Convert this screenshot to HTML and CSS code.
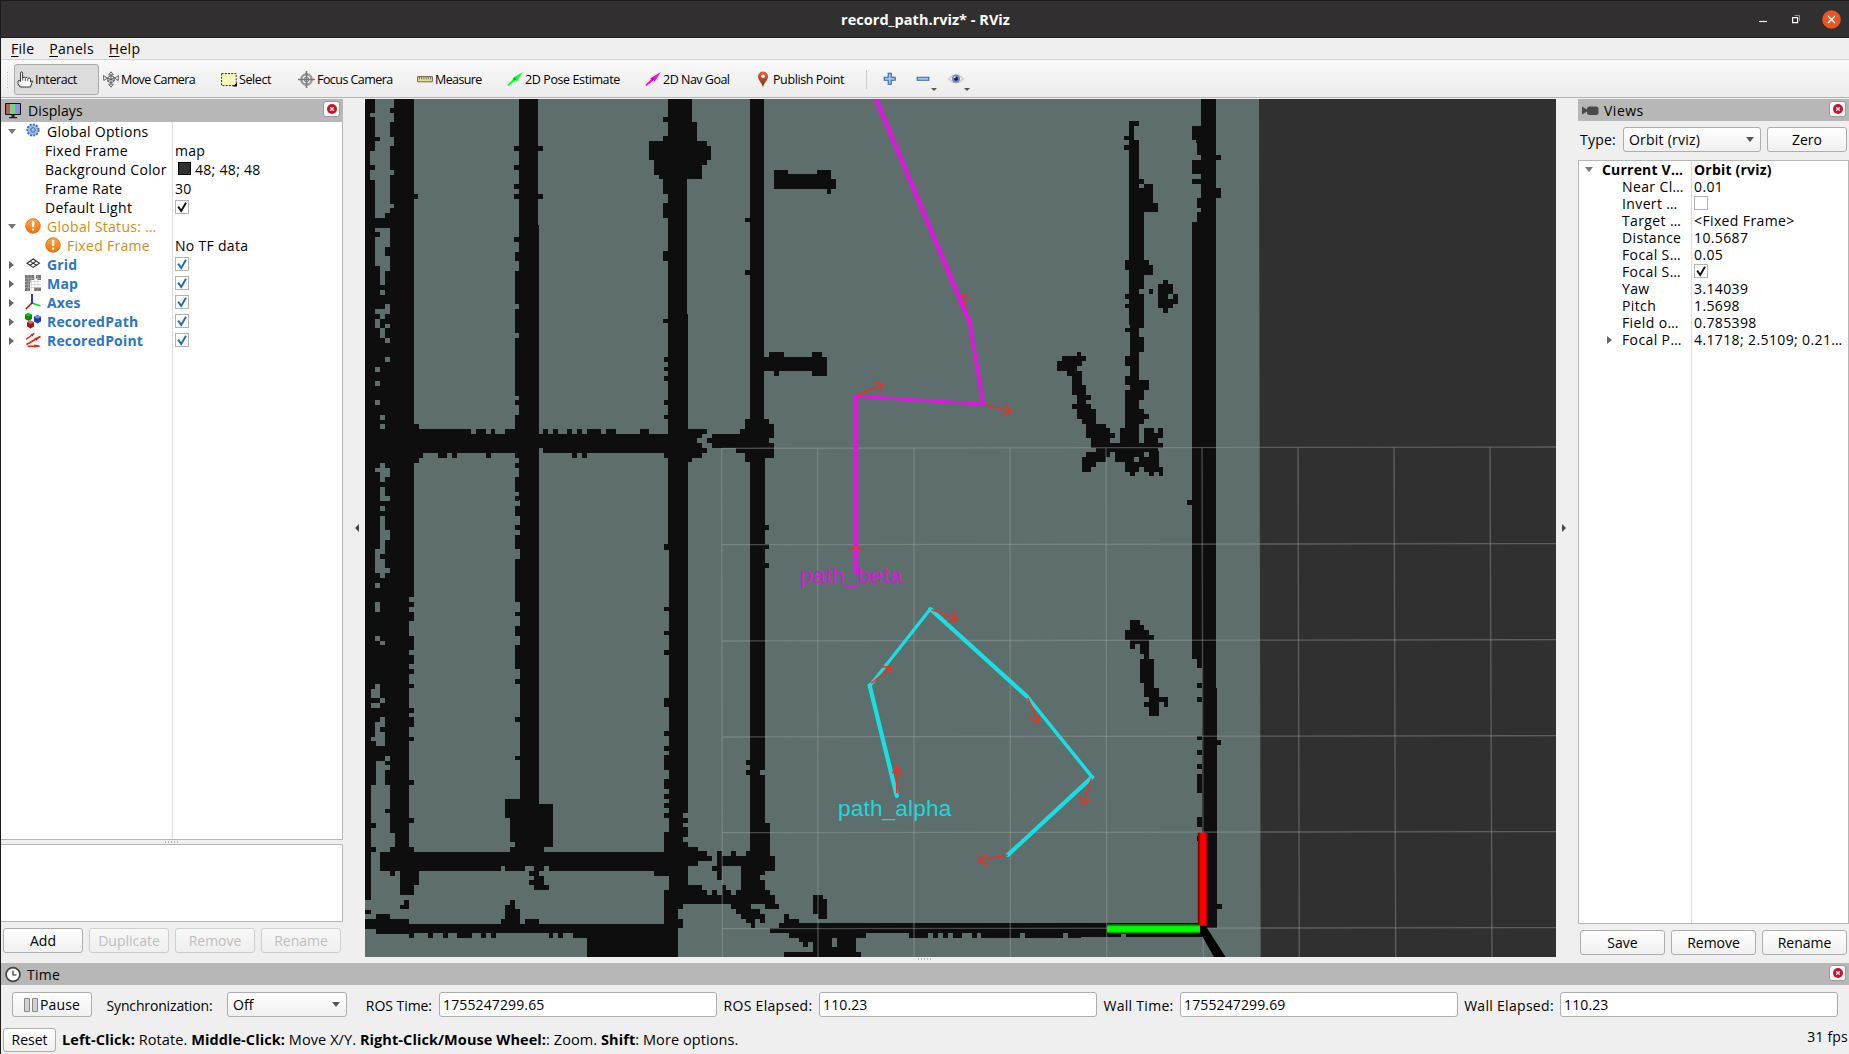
FILE: index.html
```html
<!DOCTYPE html>
<html lang="en">
<head>
<meta charset="utf-8">
<title>record_path.rviz* - RViz</title>
<link rel="stylesheet" href="styles.css">
</head>
<body>
<svg class="defs" width="0" height="0">
  <defs>
    <linearGradient id="org" x1="0" y1="0" x2="0" y2="1"><stop offset="0" stop-color="#fba94c"/><stop offset="1" stop-color="#ee6f05"/></linearGradient>
    <linearGradient id="pin" x1="0" y1="0" x2="0" y2="1"><stop offset="0" stop-color="#f0603a"/><stop offset=".6" stop-color="#a8432a"/><stop offset="1" stop-color="#3c4a20"/></linearGradient>
    <linearGradient id="scr" x1="0" y1="0" x2="1" y2="0"><stop offset=".33" stop-color="#b85a60"/><stop offset=".33" stop-color="#7fcf85"/><stop offset=".66" stop-color="#7fcf85"/><stop offset=".66" stop-color="#8f93dc"/></linearGradient>
    <linearGradient id="redAxis"><stop offset="0" stop-color="#500"/><stop offset=".3" stop-color="#f00"/><stop offset=".75" stop-color="#f00"/><stop offset="1" stop-color="#600"/></linearGradient>
    <linearGradient id="greenAxis" x1="0" y1="0" x2="0" y2="1"><stop offset="0" stop-color="#040"/><stop offset=".3" stop-color="#0f0"/><stop offset=".75" stop-color="#0f0"/><stop offset="1" stop-color="#040"/></linearGradient>
    <symbol id="warn" viewBox="0 0 16 16"><circle cx="8" cy="8" r="7.3" fill="url(#org)" stroke="#d9680a" stroke-width=".8"/><rect x="6.9" y="3" width="2.4" height="6.3" rx="1" fill="#fff"/><rect x="6.9" y="10.4" width="2.4" height="2.4" rx=".8" fill="#fff"/></symbol>
    <symbol id="check" viewBox="0 0 14 14"><path d="M3.2 6.6L6.2 11L11 2.8" fill="none" stroke="currentColor" stroke-width="1.9"/></symbol>
    <symbol id="close" viewBox="0 0 10 10"><circle cx="5" cy="5" r="5" fill="#c7162b"/><path d="M3.2 3.2L6.8 6.8M6.8 3.2L3.2 6.8" stroke="#fbe4e6" stroke-width="1.3"/></symbol>
  </defs>
</svg>

<header class="titlebar">
  <span class="title">record_path.rviz* - RViz</span>
  <div class="winbtns">
    <svg width="8" height="18"><path d="M0 11.5H8" stroke="#fff" stroke-width="1.2"/></svg>
    <svg width="8" height="18"><path d="M.6 7.6h5v5h-5z" fill="none" stroke="#fff" stroke-width="1.2"/><path d="M2.5 5.4h5v5.4" fill="none" stroke="#999" stroke-width="1"/></svg>
    <svg width="19" height="19"><circle cx="9.5" cy="9.5" r="9.3" fill="#e95420"/><path d="M6 6L13 13M13 6L6 13" stroke="#fff" stroke-width="1.4"/></svg>
  </div>
</header>

<nav class="menubar"><span><u>F</u>ile</span><span><u>P</u>anels</span><span><u>H</u>elp</span></nav>

<div class="toolbar">
  <i class="grip"></i>
  <div class="tool active w1"><svg width="16" height="17"><path d="M3.5 10.5V2.2Q3.5 .8 4.5 .8T5.6 2.2V7Q7.8 5 8.2 7Q10.3 5.5 10.8 7.4Q13.5 6 13.5 8.5V11Q15.5 9 15.5 10L13.5 16H3L1 12.5V10Q2 8.6 3.5 10.5z" fill="#fff" stroke="#333" stroke-width="1"/><path d="M8.3 7.5V10M10.8 8V10.3M5.7 7V9.5" stroke="#333" stroke-width=".8"/></svg><span>Interact</span></div>
  <div class="tool w2"><svg width="16" height="17"><g fill="none" stroke="#555" stroke-width=".9"><path d="M8 .8L10.3 3.8H5.7zM8 16.2L10.3 13.2H5.7zM.5 4.5L4.2 7.2L.8 9.5zM15.5 4.5L11.8 7.2L15.2 9.5z"/><circle cx="8" cy="8.2" r="3.4"/><path d="M4 7L12 9.8M12 6.5L4 10M8 4V13"/></g></svg><span>Move Camera</span></div>
  <div class="tool w3"><svg width="16" height="17"><path d="M.6 2.6h14.6v12H.6z" fill="#fdf8b9" stroke="#333" stroke-width="1" stroke-dasharray="2 1.2"/><path d="M16 11.5V15.4H12z" fill="#000"/></svg><span>Select</span></div>
  <div class="tool w4"><svg width="17" height="17"><g fill="none" stroke="#777"><circle cx="8.5" cy="8.5" r="5.2" stroke-width="2.4" stroke="#999"/><circle cx="8.5" cy="8.5" r="2.4"/><path d="M8.5 0V17M0 8.5H17" stroke-width="1.6"/></g></svg><span>Focus Camera</span></div>
  <div class="tool w5"><svg width="16" height="17"><path d="M.6 5.6h14.8v5.2H.6z" fill="#e6dd9c" stroke="#6b6547"/><path d="M2.5 6v2.4M4.7 6v2.4M6.9 6v2.4M9.1 6v2.4M11.3 6v2.4M13.5 6v2.4" stroke="#6b6547" stroke-width=".9"/></svg><span>Measure</span></div>
  <div class="tool w6"><svg width="16" height="17"><path d="M.2 14L6 8.2L5.4 7.2L15.8 1L9.8 10.5L8.6 9.2L1.5 15z" fill="#0aff2c"/><path d="M6.4 8.6L8 6.8L8.8 8.8z" fill="#0a6b1a"/></svg><span>2D Pose Estimate</span></div>
  <div class="tool w7"><svg width="16" height="17"><path d="M.2 14L6 8.2L5.4 7.2L15.8 1L9.8 10.5L8.6 9.2L1.5 15z" fill="#ff0ad8"/><path d="M6.4 8.6L8 6.8L8.8 8.8z" fill="#7a0a6a"/></svg><span>2D Nav Goal</span></div>
  <div class="tool w8"><svg width="12" height="17"><path d="M6 16.3C4.7 11.5 1 9 1 5.5A5 5 0 0 1 11 5.5C11 9 7.3 11.5 6 16.3z" fill="url(#pin)"/><circle cx="6" cy="5.2" r="1.8" fill="#fff"/></svg><span>Publish Point</span></div>
  <i class="tsep"></i>
  <div class="mini"><svg width="14" height="14"><path d="M5.2 1.2h3v4h4v3h-4v4h-3v-4h-4v-3h4z" fill="#a9c6ea" stroke="#3465a4" stroke-width="1.1"/></svg></div>
  <div class="mini dd"><svg width="14" height="14"><path d="M1.2 5.3h11.6v3H1.2z" fill="#a9c6ea" stroke="#3465a4" stroke-width="1.1"/></svg></div>
  <div class="mini dd"><svg width="16" height="14"><path d="M.5 7Q8-2 15.5 7Q8 15 .5 7z" fill="#e9e9ea" stroke="#b9b9b9"/><circle cx="8" cy="6.8" r="4" fill="#7287c4"/><circle cx="8" cy="6.8" r="2" fill="#141a3a"/><circle cx="6.7" cy="5.2" r="1" fill="#dfe6fa"/></svg></div>
</div>

<main class="work">
  <section class="dock left">
    <div class="dhead"><svg class="hicon" width="16" height="17"><path d="M.5 1.5h15v11H.5z" fill="url(#scr)" stroke="#111"/><path d="M6.5 13h3v2h2.5v1.3H4V15h2.5z" fill="#222"/></svg><span>Displays</span><b class="xbtn"><svg width="10" height="10"><use href="#close"/></svg></b></div>
    <div class="tree ltree">
      <div class="row"><i class="exp open"></i><svg class="ic" width="16" height="16"><circle cx="8" cy="7" r="5.6" fill="#8fb3e3" stroke="#3a6fb7" stroke-width="2" stroke-dasharray="2 1.2"/><circle cx="8" cy="7" r="4.6" fill="#9dbde8"/><circle cx="8" cy="7" r="2.3" fill="none" stroke="#3a6fb7"/></svg><span>Global Options</span></div>
      <div class="row sub"><span class="k">Fixed Frame</span><span>map</span></div>
      <div class="row sub"><span class="k">Background Color</span><i class="swatch"></i><span>48; 48; 48</span></div>
      <div class="row sub"><span class="k">Frame Rate</span><span>30</span></div>
      <div class="row sub"><span class="k">Default Light</span><i class="cb dark"><svg width="14" height="14"><use href="#check"/></svg></i></div>
      <div class="row warn"><i class="exp open"></i><svg class="ic" width="16" height="16"><use href="#warn"/></svg><span>Global Status: …</span></div>
      <div class="row warn sub2"><svg class="ic" width="16" height="16"><use href="#warn"/></svg><span class="k">Fixed Frame</span><span class="blk">No TF data</span></div>
      <div class="row disp"><i class="exp"></i><svg class="ic" width="16" height="16"><g fill="none" stroke="#333" stroke-width="1.1"><path d="M8.2 3L14.5 7.2L8.2 11.4L2 7.2z"/><path d="M5.1 5.1L11.4 9.3M11.3 5.1L5 9.3"/></g></svg><span class="k">Grid</span><i class="cb"><svg width="14" height="14"><use href="#check"/></svg></i></div>
      <div class="row disp"><i class="exp"></i><svg class="ic" width="16" height="16"><path d="M0 0h9v5H5.5v3H5v8H0zM11 0H16v5h-3.500v-1.500h-1.500zM9 12.500h7V16H9z" fill="#777"/><path d="M0 3.500h16M0 6.500h16M0 9.500h16M0 12.500h16M3.200 0v16M6.400 0v16M9.600 0v16M12.800 0v16" stroke="#bbb" stroke-width=".5"/></svg><span class="k">Map</span><i class="cb"><svg width="14" height="14"><use href="#check"/></svg></i></div>
      <div class="row disp"><i class="exp"></i><svg class="ic" width="16" height="16"><g fill="none" stroke-width="1.6"><path d="M7 9L15.500 12" stroke="#0d0"/><path d="M7 9L.8 15" stroke="#e00"/><path d="M7 9.500V0" stroke="#00d"/></g></svg><span class="k">Axes</span><i class="cb"><svg width="14" height="14"><use href="#check"/></svg></i></div>
      <div class="row disp"><i class="exp"></i><svg class="ic" width="16" height="16"><path d="M3.500 0L7 1.800V6L3.500 8L0 6V1.800z" fill="#0a8a0a"/><path d="M3.500 0L7 1.800L3.500 3.600L0 1.800z" fill="#0c0"/><path d="M12.500 2L16 3.800V8.500L12.500 10.500L9 8.500V3.800z" fill="#1c3fae"/><path d="M12.500 2L16 3.800L12.500 5.800L9 3.800z" fill="#6a90f0"/><path d="M5.500 7.500L9 9.200V13.500L5.500 15.500L2 13.500V9.200z" fill="#a31515"/><path d="M5.500 7.500L9 9.200L5.500 11L2 9.200z" fill="#f25a5a"/></svg><span class="k">RecoredPath</span><i class="cb"><svg width="14" height="14"><use href="#check"/></svg></i></div>
      <div class="row disp"><i class="exp"></i><svg class="ic" width="16" height="16"><g stroke="#f0200c" stroke-width="1.500" fill="none"><path d="M1 7.500L9 1.500M1.500 12.500L15.500 4.500M2.500 14.200H14.500"/></g><path d="M5.500 2.500L10 .8L7.500 4.500zM9 6.500L15.500 3.800L11.500 8.800zM9 12.400L15 13.800L9.500 15.800z" fill="#f0200c"/></svg><span class="k">RecoredPoint</span><i class="cb"><svg width="14" height="14"><use href="#check"/></svg></i></div>
    </div>
    <i class="dots"></i>
    <div class="desc"></div>
    <div class="btns"><button>Add</button><button disabled>Duplicate</button><button disabled>Remove</button><button disabled>Rename</button></div>
  </section>

  <div class="gutter"><i class="tri l"></i></div>

  <svg class="view" viewBox="15 12 3573 2574" width="1191" height="858">
    <rect x="15" y="12" width="3573" height="2574" fill="#303030"/>
    <path d="M15 12H2697L2702 2586H15z" fill="#5e6e6c"/>
    <g class="occ">
      <path d="M15 12H162V297H174V312H162V987H177V1002H333V1017H348V1002H378V1017H393V1002H405V1017H435V1002H480V1074H393V1089H378V1074H291V1089H276V1074H261V1089H234V1074H189V1089H177V1104H162V1216H15z"/>
      <path d="M477 12H534V153H549V168H534V297H549V312H534V390H537V1017H549V1002H564V1017H579V1002H594V1017H621V1002H636V1017H651V1002H666V1017H681V1002H723V1017H738V1002H768V1017H840V1002H867V1017H925V1074H681V1089H666V1074H651V1089H636V1074H549V1059H537V1216H477V1218H465V1203H477V1191H465V1146H477V1119H465V1104H477V1089H465V960H477V930H465V915H477V903H465V729H477V714H465V642H477V627H465V528H477V498H465V471H477V441H462V426H477V312H462V297H477V282H462V267H477V225H462V210H477V168H462V153H477z"/>
      <path d="M924 12H996V81H1011V138H1041V153H1053V195H1041V210H1026V252H981V657H984V1002H1041V1017H1026V1029H1011V1044H1026V1059H1041V1074H1026V1089H996V1101H984V1216H924V1089H912V1074H924V972H912V960H924V930H912V915H924V858H912V843H924V828H912V816H924V801H912V786H924V684H909V672H924V498H909V468H924V369H909V324H924V297H909V252H897V240H882V195H867V138H909V123H924V81H909V66H924z"/>
      <path d="M1170 12H1212V972H1227V987H1242V1029H1227V1044H1242V1089H1215V1216H1170V1101H1155V1074H1128V1059H1056V1044H1041V1029H1056V1017H1140V1002H1155V972H1170V540H1155V525H1170V381H1155V369H1170z"/>
      <g transform="translate(0 1215)">
        <path d="M15 0H162V291H147V306H162V321H147V336H162V363H147V408H162V450H147V465H162V492H147V507H162V522H147V552H162V564H147V624H162V639H147V651H162V681H147V711H162V723H147V840H162V855H147V954H162V969H147V1041H162V1056H90V1041H105V999H90V939H75V927H90V855H75V810H90V795H75V783H48V855H33V969H48V984H33V1041H48V1056H33V1200H15z"/>
        <path d="M60 1056H925V1113H567V1098H552V1113H537V1128H552V1155H567V1170H522V1155H507V1140H522V1128H507V1113H522V1098H495V1113H435V1098H423V1113H177V1155H162V1185H120V1113H105V1128H90V1113H60z"/>
        <path d="M480 0H537V912H579V1041H552V1056H450V1041H465V1026H450V954H435V897H480V780H465V768H480V666H465V651H480V552H465V537H480V507H465V435H480V408H465V378H480V348H465V336H480V306H465V177H480V147H465V105H480V90H465V75H480V48H465V18H480z"/>
        <path d="M15 1230H33V1242H15zM120 1215h12v-15h15v27h-27z"/>
        <path d="M15 1257H48V1242H90V1257H147V1272H423V1257H435V1215H450V1200H465V1227H480V1272H495V1257H537V1272H954V1371H681V1314H639V1299H609V1314H594V1299H579V1314H567V1299H408V1314H393V1299H378V1314H363V1299H336V1314H291V1299H264V1314H249V1299H219V1314H204V1299H162V1314H147V1301H48V1287H15z"/>
        <path d="M924 0H984V939H969V954H984V969H969V981H984V1011H969V1026H984V1041H1014V1053H1041V1068H1056V1083H1014V1098H984V1155H1026V1170H1041V1185H1056V1170H1071V1185H1086V1155H1098V1170H1113V1185H1128V1170H1143V1098H1086V1140H1071V1113H1056V1098H1071V1053H1086V1068H1113V1053H1128V1068H1158V1053H1170V825H1158V810H1170V795H1158V780H1170V0H1215V75H1227V90H1215V132H1227V147H1215V189H1227V204H1215V810H1200V825H1215V969H1230V1068H1245V1113H1215V1125H1200V1140H1215V1170H1230V1185H1245V1212H1257V1227H1215V1212H1173V1227H1200V1242H1215V1269H1200V1257H1185V1284H1173V1269H1158V1257H1143V1242H1128V1227H1113V1212H969V1227H954V1257H969V1284H954V1290H912V1170H927V1128H882V1113H912V996H927V954H912V939H927V924H912V909H927V897H912V882H927V867H912V837H927V810H912V765H927V753H912V738H927V708H912V693H927V621H912V594H927V465H912V450H927V405H912V393H927V333H912V321H927V150H912V132H924z"/>
      </g>
      <g transform="translate(1140 0)">
        <path d="M102 225H144V237H231V225H273V252H288V282H273V297H261V282H102zM72 786H87V771H132V786H216V771H246V786H261V843H216V828H117V843H102V828H72z"/>
      </g>
      <g transform="translate(2010 0)">
        <path d="M297 78H327V93H312V135H327V252H342V267H369V324H384V351H342V495H357V510H369V540H342V582H327V597H342V699H327V726H342V771H327V855H357V885H342V915H327V942H342V957H357V972H342V987H327V1044H342V999H372V1014H384V999H399V1029H384V1044H399V1059H384V1068H387V1116H399V1143H387V1131H372V1143H357V1131H342V1116H327V1131H315V1143H300V1131H285V1101H255V1071H240V1086H228V1101H198V1116H183V1131H156V1086H168V1071H198V1059H183V1029H168V987H156V972H141V942H126V927H141V900H126V843H111V828H81V798H96V783H141V771H153V783H168V798H156V813H141V828H156V870H168V900H183V915H168V927H183V942H198V987H228V999H240V1014H255V1029H240V1044H270V999H285V885H300V870H285V843H300V813H285V783H300V711H285V699H300V690H297V639H285V627H297V612H285V597H297V525H285V495H297V165H282V150H297V135H282V123H297z"/>
        <path d="M357 582h12v15h-12zM399 555H414V567H429V597H444V627H429V639H414V654H399V639H384V567H399z"/>
        <path d="M513 12H558V180H573V195H558V279H573V309H558V1320H486V1230H471V1215H486V381H501V351H513V339H501V309H513V267H486V252H513V237H486V195H513V180H501V144H498V135H486V93H513z"/>
      </g>
      <g transform="matrix(1.0714 0 0 1 1200 1395)">
        <path d="M1210 -80H1277V384H1280V540H1291V555H1280V1032H1294V1047H1280V1103H1226V843H1224V828H1238V801H1224V771H1238V699H1224V642H1238V627H1224V612H1238V585H1224V570H1238V540H1224V528H1238V426H1224V411H1238V384H1224V369H1238V324H1224V297H1210z"/>
        <path d="M1036 180H1064V195H1075V210H1089V225H1103V240H1089V297H1103V384H1117V411H1142V441H1131V426H1117V468H1089V441H1075V426H1089V411H1075V369H1064V297H1075V282H1064V252H1050V267H1036V240H1022V210H1036z"/>
        <path d="M148 1005H176V1017H188V1077H162V1062H148z"/>
        <path d="M67 1062H81V1077H109V1089H1240V1131H1025V1122H1011V1131H899V1133H862V1119H848V1133H742V1119H728V1133H619V1119H608V1133H594V1119H566V1133H540V1119H526V1133H512V1119H498V1133H484V1119H470V1133H417V1119H297V1133H269V1177H283V1191H67V1177H148V1147H134V1161H120V1147H109V1133H81V1119H28V1105H53V1089H67z"/>
      </g>
    </g>
    <g class="free">
      <path d="M45 12H102V39H90V54H102V81H90V126H102V153H90V225H102V240H90V327H102V339H90V354H75V369H45V255H30V225H45V210H30V168H45V138H60V126H45V66H30V54H45zM45 399H90V456H75V483H90V528H75V570H60V513H45V426H60V411H45zM60 585h15v15h-15zM75 627H90V657H75V672H60V657H45V642H75zM45 672H60V699H75V729H60V699H45zM75 687h15v12h-15zM75 729h15v15h-15zM75 786h15v15h-15zM45 816h15v15h-15zM45 858h15v15h-15zM45 915h15v15h-15zM60 960h15v15h-15zM60 987h15v15h-15zM60 1104H75V1119H90V1146H75V1161H60V1131H45V1119H60zM60 1176H75V1203H90V1218H60z"/>
      <path transform="translate(0 1215)" d="M60 18h15v15h-15zM60 48H75V90H90V120H75V162H60V177H75V204H90V219H75V234H60V219H45V147H60zM45 249h15v15h-15zM45 306h15v30h-15zM45 408h15v15h-15zM60 423h15v12h-15zM45 552H60V594H33V567H45zM60 594h15v15h-15zM33 609h27v15h-27zM60 651H75V681H60V696H75V738H48V723H33V711H45V666H60zM75 768h15v15h-15z"/>
      <path transform="translate(2010 0)" d="M327 267h15v12h-15zM312 1086h15v15h-15zM342 1071h15v15h-15zM414 597h15v15h-15z"/>
      <path transform="matrix(1.0714 0 0 1 1200 1395)" d="M202 1133h14v28h-14z"/>
    </g>
    <g class="grid">
      <path d="M1085 1060L3588 1056M1087 1349L3588 1346M1087 1638L3588 1634M1087 1926L3588 1922M1087 2213L3588 2210M1087 2501L3588 2498"/>
      <path d="M1085 1060L1087 2586M1373 1060L1374 2586M1662 1060V2586M1950 1059L1951 2586M2238 1059L2240 2586M2526 1058L2530 2586M2814 1058L2818 2586M3102 1057L3107 2586M3390 1057L3396 2586"/>
    </g>
    <g class="arrow" transform="translate(1140 0)">
      <path d="M680 655L668 598M654 622L668 598L690 612M350 902L428 868M400 860L428 868L416 892M732 928L812 950M797 930L812 950L787 962"/>
    </g>
    <g class="mag" transform="translate(1140 0)">
      <path d="M405 5L688 680" stroke-width="13"/><path d="M688 676L730 930" stroke-width="11"/><path d="M732 928L344 903" stroke-width="9"/><path d="M348 900V1438" stroke-width="13"/>
    </g>
    <path class="arrow" transform="translate(1140 0)" d="M331 1371L348 1352L365 1371"/>
    <text class="lab" x="1319" y="1464" textLength="307" fill="#d31ad6">path_beta</text>
    <text class="lab" x="1434" y="2163" textLength="340" fill="#1bd9dc">path_alpha</text>
    <g class="cyan" transform="matrix(1.0714 0 0 1 1200 1395)">
      <path d="M383 708L307 376" stroke-width="12"/><path d="M307 378L477 147" stroke-width="9"/><path d="M477 147L746 408" stroke-width="12"/><path d="M745 406L930 651" stroke-width="10"/><path d="M930 651L694 885" stroke-width="12"/>
    </g>
    <g class="arrow" transform="matrix(1.0714 0 0 1 1200 1395)">
      <path d="M480 149L552 178M539 155L552 178L526 188M312 370L367 320M341 321L367 320L362 346M383 700L382 621M370 640L382 621L399 643M750 414L780 487M754 475L780 487L782 465M928 655L904 731M893 707L904 731L926 718M694 885L612 902M629 881L612 902L635 914"/>
    </g>
    <g transform="matrix(1.0714 0 0 1 1200 1395)">
      <rect x="1226" y="818" width="28" height="280" fill="url(#redAxis)"/>
      <rect x="972" y="1092" width="260" height="29" fill="url(#greenAxis)"/>
      <path d="M1234 1098L1246 1096L1254 1108L1306 1195H1273L1232 1116z" fill="#000"/>
    </g>
  </svg>

  <div class="gutter r"><i class="tri rt"></i></div>

  <section class="dock right">
    <div class="dhead"><svg class="hicon" width="17" height="17"><path d="M0 4.500L5 7.500V9.500L0 12.500z" fill="#4a4a4a"/><rect x="5" y="4.500" width="11.500" height="8.500" rx="2.500" fill="#4a4a4a"/></svg><span>Views</span><b class="xbtn"><svg width="10" height="10"><use href="#close"/></svg></b></div>
    <div class="typerow"><label>Type:</label><div class="combo">Orbit (rviz)</div><button>Zero</button></div>
    <div class="tree rtree">
      <div class="row bold"><i class="exp open"></i><span class="k">Current V…</span><span>Orbit (rviz)</span></div>
      <div class="row"><span class="k">Near Cl…</span><span>0.01</span></div>
      <div class="row"><span class="k">Invert …</span><i class="cb"></i></div>
      <div class="row"><span class="k">Target …</span><span>&lt;Fixed Frame&gt;</span></div>
      <div class="row"><span class="k">Distance</span><span>10.5687</span></div>
      <div class="row"><span class="k">Focal S…</span><span>0.05</span></div>
      <div class="row"><span class="k">Focal S…</span><i class="cb dark"><svg width="14" height="14"><use href="#check"/></svg></i></div>
      <div class="row"><span class="k">Yaw</span><span>3.14039</span></div>
      <div class="row"><span class="k">Pitch</span><span>1.5698</span></div>
      <div class="row"><span class="k">Field o…</span><span>0.785398</span></div>
      <div class="row last"><i class="exp"></i><span class="k">Focal P…</span><span>4.1718; 2.5109; 0.21…</span></div>
    </div>
    <div class="btns"><button>Save</button><button>Remove</button><button>Rename</button></div>
  </section>
</main>

<div class="hsplit"><i class="dots"></i></div>

<section class="time">
  <div class="dhead"><svg class="hicon" width="16" height="17"><circle cx="8" cy="8.500" r="6.900" fill="#fff" stroke="#444" stroke-width="1.700"/><path d="M8 4.500V9H11.500" fill="none" stroke="#222" stroke-width="1.100"/></svg><span>Time</span><b class="xbtn"><svg width="10" height="10"><use href="#close"/></svg></b></div>
  <div class="trow">
    <button class="pause"><svg width="14" height="14"><path d="M.500 .500h5v13h-5zM8.500 .500h5v13h-5z" fill="#cfd2cf" stroke="#888"/></svg>Pause</button>
    <label class="l1">Synchronization:</label><div class="combo">Off</div>
    <label class="l2">ROS Time:</label><div class="field">1755247299.65</div>
    <label class="l3">ROS Elapsed:</label><div class="field">110.23</div>
    <label class="l4">Wall Time:</label><div class="field">1755247299.69</div>
    <label class="l5">Wall Elapsed:</label><div class="field">110.23</div>
  </div>
</section>

<footer class="status"><button>Reset</button><p><b>Left-Click:</b> Rotate. <b>Middle-Click:</b> Move X/Y. <b>Right-Click/Mouse Wheel:</b>: Zoom. <b>Shift</b>: More options.</p><span class="fps">31 fps</span></footer>
</body>
</html>
```
FILE: styles.css
```css
* { box-sizing: border-box; }
body {
  margin: 0;
  width: 1849px;
  height: 1054px;
  overflow: hidden;
  display: flex;
  flex-direction: column;
  background: #efefef;
  border-left: 1px solid #1c1b1b;
  color: #000;
  font: 14px/18px "Open Sans", "Noto Sans", sans-serif;
  white-space: nowrap;
}
.defs { position: absolute; }
svg { flex: none; display: block; }
i { font-style: normal; }
button, .combo, .field {
  font: inherit;
  color: inherit;
  height: 25px;
  padding: 0;
  border: 1px solid #adadad;
  border-radius: 3px;
  background: linear-gradient(#fff, #f0f0f0);
  display: flex;
  align-items: center;
  justify-content: center;
}
button:disabled { color: #bebebe; border-color: #cdcdcd; background: linear-gradient(#f8f8f8, #efefef); }
.combo { justify-content: space-between; padding: 0 6px 0 5px; }
.combo::after { content: ""; border: 4px solid transparent; border-top: 5px solid #555; border-bottom: 0; }
.field { background: #fff; justify-content: flex-start; padding-left: 3px; }

.titlebar {
  height: 38px;
  flex: none;
  display: grid;
  grid-template-columns: 1fr auto 1fr;
  align-items: center;
  background: #322f30;
  border-top: 1px solid #1c1b1b;
  border-bottom: 1px solid #1f1d1d;
  color: #fff;
  font-size: 14.5px;
  font-weight: 700;
}
.title { grid-column: 2; letter-spacing: .03px; padding: 2px 0 0 1px; }
.winbtns { justify-self: end; display: flex; align-items: center; gap: 25px; padding-right: 8px; }
.winbtns svg:last-child { margin-left: -3px; }

.menubar { height: 22px; flex: none; display: flex; gap: 15px; padding: 2px 0 0 10px; border-bottom: 1px solid #d2d2d2; letter-spacing: .28px; }
.menubar u { text-underline-offset: 2px; }

.toolbar {
  height: 38px;
  flex: none;
  display: flex;
  align-items: center;
  padding-top: 1px;
  background: linear-gradient(#f9f9f9, #ececec);
  border-bottom: 1px solid #b4b4b4;
  font-size: 12.5px;
  letter-spacing: -.4px;
}
.tool span { padding-top: 1px; }
.grip { width: 4px; height: 17px; margin: 0 4px 0 5px; background: radial-gradient(circle, #bbb 38%, transparent 45%) 0 0 / 3px 3px; }
.tool { height: 31px; display: flex; align-items: center; gap: 2px; padding-left: 3px; border: 1px solid transparent; border-radius: 3px; }
.tool.active { background: #dcdcdc; border-color: #ababab; }
.w1 { width: 85px; padding-left: 2px; }
.w2 { width: 118px; letter-spacing: -.6px; }
.w3 { width: 77px; }
.w4 { width: 119px; letter-spacing: -.55px; }
.w5 { width: 90px; letter-spacing: -.6px; }
.w6 { width: 138px; }
.w7 { width: 112px; letter-spacing: -.5px; }
.w8 { width: 113px; gap: 4px; }
.tsep { width: 1px; height: 19px; background: #ccc; }
.mini { width: 33px; height: 30px; position: relative; display: flex; align-items: center; justify-content: center; }
.tsep + .mini { margin-left: 6px; }
.mini.dd::after { content: ""; position: absolute; right: 2px; bottom: 3px; border: 3px solid transparent; border-top: 3px solid #555; border-bottom: 0; }

.work { flex: none; height: 859px; padding-top: 1px; display: flex; background: #efefef; }
.dock { display: flex; flex-direction: column; }
.left { width: 342px; }
.right { width: 271px; }
.dhead { height: 23px; flex: none; display: flex; align-items: center; background: #b7b7b7; letter-spacing: .25px; }
.left .dhead { padding-left: 4px; letter-spacing: .1px; }
.hicon { margin-right: 7px; }
.dhead span { padding-top: 1px; }
.xbtn { width: 17px; height: 16px; margin: 0 3px 3px auto; display: grid; place-items: center; background: #fafafa; border: 1px solid #999; border-radius: 3px; }

.tree { background: #fff; border: 1px solid #b6b6b6; border-top: 0; position: relative; display: flex; flex-direction: column; }
.row { display: flex; align-items: center; flex: none; }
.ltree { height: 718px; border-left: 0; letter-spacing: .3px; background: linear-gradient(#dcdcdc, #dcdcdc) 171px 0 / 1px 100% no-repeat #fff; }
.ltree .row { height: 19px; padding-left: 6px; }
.exp { width: 9px; display: flex; justify-content: center; }
.exp::after { content: ""; border: 4px solid transparent; border-left: 5px solid #666; border-right: 0; }
.exp.open::after { border: 4px solid transparent; border-top: 5px solid #777; border-bottom: 0; }
.ic { margin: 0 6px 2px 9px; }
.ltree .row.sub { padding-left: 44px; }
.sub .k { width: 130px; }
.ltree .row.sub2 { padding-left: 35px; }
.sub2 .k { width: 108px; }
.disp .k { width: 128px; color: #2a76c6; font-weight: 700; letter-spacing: .18px; }
.warn { color: #cf8e16; }
.blk { color: #000; }
.swatch { width: 13px; height: 13px; margin: 0 4px 2px 3px; background: #303030; border: 1px solid #000; }
.cb { width: 14px; height: 14px; margin-bottom: 2px; background: #fff; border: 1px solid #b4b4b4; color: #1f6ab4; }
.cb svg { margin: -1px; }
.cb.dark { color: #111; }
.dots { display: block; width: 15px; height: 2px; margin: 0 auto; background: repeating-linear-gradient(90deg, #b5b5b5 0 1px, transparent 1px 3px); }
.left > .dots { margin: 1px 0 1px 164px; }
.desc { height: 78px; flex: none; background: #fff; border: 1px solid #b6b6b6; border-left: 0; }
.left .btns { display: grid; grid-template-columns: repeat(4, 80px); gap: 6px; padding: 6px 0 0 2px; }

.gutter { width: 22px; display: flex; align-items: center; padding: 0 0 0 12px; }
.tri { border: 4px solid transparent; border-right: 4px solid #444; border-left: 0; }
.tri.rt { border: 4px solid transparent; border-left: 4px solid #444; border-right: 0; }
.gutter.r { padding-left: 6px; }

.view { width: 1191px; height: 858px; }
.occ { fill: #0e0e0e; shape-rendering: crispEdges; }
.free { fill: #5e6e6c; shape-rendering: crispEdges; }
.grid { fill: none; stroke: rgba(160, 160, 164, .42); stroke-width: 4; }
.lab { font: 68px "Liberation Sans", Arial, sans-serif; }
.arrow { fill: none; stroke: #fa2a1c; stroke-width: 4; }
.mag { fill: none; stroke: #e313e3; }
.cyan { fill: none; stroke: #18e0e2; stroke-linecap: round; }

.right .dhead { height: 22px; padding-left: 4px; letter-spacing: .5px; }
.right .hicon { margin-right: 5px; }
.right .xbtn { margin-bottom: 2px; }
.typerow { display: grid; grid-template-columns: 37px 138px 80px; gap: 6px; align-items: center; padding: 6px 0 8px 2px; letter-spacing: .22px; }
.rtree { height: 764px; border-top: 1px solid #b6b6b6; background: linear-gradient(#dcdcdc, #dcdcdc) 112px 0 / 1px 100% no-repeat #fff; }
.rtree .row { height: 17px; padding-left: 43px; letter-spacing: .38px; }
.rtree .row.bold { padding-left: 5px; font-weight: 700; letter-spacing: .2px; }
.rtree .k { width: 72px; }
.rtree .bold .k { width: 92px; margin-left: 9px; }
.rtree .row.last { padding-left: 26px; }
.last .exp { margin-right: 8px; }
.right .btns { display: grid; grid-template-columns: repeat(3, 85px); gap: 6px; padding: 6px 0 0 2px; }

.hsplit { height: 6px; flex: none; padding-top: 1px; }
.time { height: 61px; flex: none; }
.time .dhead { height: 22px; padding-left: 4px; }
.time .hicon { margin-right: 6px; }
.trow { display: flex; align-items: center; padding: 7px 10px 0 11px; }
.trow label { display: flex; justify-content: center; letter-spacing: .3px; padding-top: 2px; }
.trow .combo { width: 120px; }
.field { width: 278px; letter-spacing: .13px; }
.pause { width: 80px; gap: 2px; letter-spacing: .1px; }
.trow .l1 { width: 135px; letter-spacing: -.15px; }
.trow .l2 { width: 92px; justify-content: flex-end; padding-right: 7px; letter-spacing: -.05px; }
.l3 { width: 102px; }
.l4 { width: 83px; }
.l5 { width: 102px; }
.status { display: flex; align-items: center; height: 30px; padding: 2px 1px 0 2px; }
.status button { width: 53px; height: 24px; }
.status p { margin: 0 0 1px 6px; font-size: 14.5px; letter-spacing: .08px; }
.fps { margin-left: auto; padding-bottom: 7px; letter-spacing: .2px; }
```
